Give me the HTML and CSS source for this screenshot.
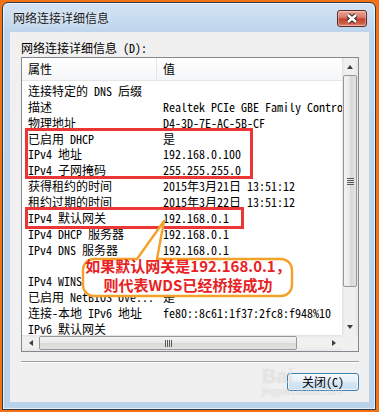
FILE: index.html
```html
<!DOCTYPE html>
<html>
<head>
    <meta charset="UTF-8">
    <title>网络连接详细信息</title>
    <meta name="viewport" content="width=device-width, initial-scale=1.0">
    <link rel="stylesheet" href="styles.css">
</head>
<body>
    <div class="window">
        <div class="titlebar">
            <span class="title">网络连接详细信息</span>
            <div class="close-btn">
                <svg width="28" height="15" viewBox="0 0 28 15">
                    <path d="M10 4 L18 11 M18 4 L10 11" stroke="#3a2626" stroke-width="4.6" fill="none"/>
                    <path d="M10 4 L18 11 M18 4 L10 11" stroke="#ffffff" stroke-width="2.4" fill="none"/>
                </svg>
            </div>
        </div>

        <div class="client">
            <div class="label">网络连接详细信息 (D):</div>

            <div class="listview">
                <div class="list-main">
                    <div class="list-header">
                        <div class="c1">属性</div>
                        <div class="c2">值</div>
                    </div>
                    <div class="list-rows">
                        <div class="row"><span class="c1">连接特定的 DNS 后缀</span><span class="c2"></span></div>
                        <div class="row"><span class="c1">描述</span><span class="c2">Realtek PCIe GBE Family Controller</span></div>
                        <div class="row"><span class="c1">物理地址</span><span class="c2">D4-3D-7E-AC-5B-CF</span></div>
                        <div class="row"><span class="c1">已启用 DHCP</span><span class="c2">是</span></div>
                        <div class="row"><span class="c1">IPv4 地址</span><span class="c2">192.168.0.100</span></div>
                        <div class="row"><span class="c1">IPv4 子网掩码</span><span class="c2">255.255.255.0</span></div>
                        <div class="row"><span class="c1">获得租约的时间</span><span class="c2">2015年3月21日 13:51:12</span></div>
                        <div class="row"><span class="c1">租约过期的时间</span><span class="c2">2015年3月22日 13:51:12</span></div>
                        <div class="row"><span class="c1">IPv4 默认网关</span><span class="c2">192.168.0.1</span></div>
                        <div class="row"><span class="c1">IPv4 DHCP 服务器</span><span class="c2">192.168.0.1</span></div>
                        <div class="row"><span class="c1">IPv4 DNS 服务器</span><span class="c2">192.168.0.1</span></div>
                        <div class="row"><span class="c1"></span><span class="c2"></span></div>
                        <div class="row"><span class="c1">IPv4 WINS 服务器</span><span class="c2"></span></div>
                        <div class="row"><span class="c1">已启用 NetBIOS ove...</span><span class="c2">是</span></div>
                        <div class="row"><span class="c1">连接-本地 IPv6 地址</span><span class="c2">fe80::8c61:1f37:2fc8:f948%10</span></div>
                        <div class="row"><span class="c1">IPv6 默认网关</span><span class="c2"></span></div>
                    </div>
                </div>

                <div class="vscroll">
                    <div class="sb-btn"><span class="tri-up"></span></div>
                    <div class="thumb-v"><span class="grip-v"></span></div>
                    <div class="sb-space"></div>
                    <div class="sb-btn"><span class="tri-down"></span></div>
                </div>

                <div class="hscroll">
                    <div class="sb-btn-h"><span class="tri-left"></span></div>
                    <div class="thumb-h"><span class="grip-h"></span></div>
                    <div class="sb-space"></div>
                    <div class="sb-btn-h"><span class="tri-right"></span></div>
                </div>

                <div class="corner"></div>
            </div>

            <div class="separator"></div>

            <div class="footer">
                <button class="button">关闭(C)</button>
            </div>
        </div>
    </div>

    <!-- marcas vermelhas e balão de anotação -->
    <div class="mark mark-dhcp"></div>
    <div class="mark mark-gateway"></div>

    <svg class="callout-shape" width="379" height="412" viewBox="0 0 379 412">
        <path d="M94 259 L137 259 L164 221 L157 259 L281 259 A11 11 0 0 1 292 270 L292 285 A11 11 0 0 1 281 296 L94 296 A11 11 0 0 1 83 285 L83 270 A11 11 0 0 1 94 259 Z"
              fill="#ffffff" stroke="#f4a12a" stroke-width="2.4" stroke-linejoin="round"/>
    </svg>
    <div class="callout-text">如果默认网关是192.168.0.1，<br>则代表WDS已经桥接成功</div>

    <div class="watermark">
        <span class="wm-logo">Bai</span>
        <span class="wm-url">jingyan.baidu.com</span>
    </div>
</body>
</html>
```

FILE: styles.css
```css
* {
    box-sizing: border-box;
}
html, body {
    margin: 0;
}
body {
    width: 379px;
    height: 412px;
    background-color: #f47216;
    padding: 2px 3px 2px 2px;
    position: relative;
    overflow: hidden;
    font-family: "Noto Sans Mono CJK SC", "Liberation Mono", "Noto Sans CJK SC", monospace;
    font-size: 12px;
    color: #000;
}
.window {
    height: 408px;
    border: 1px solid #2e3a48;
    border-radius: 6px 6px 0 0;
    background: linear-gradient(#d3e3f4, #bed4ec 30px, #b9d1ea);
    box-shadow: inset 0 0 0 1px rgba(255, 255, 255, 0.6);
    padding: 0 6px 7px 7px;
    display: flex;
    flex-direction: column;
}
.titlebar {
    height: 29px;
    display: flex;
    justify-content: space-between;
    align-items: flex-start;
    padding: 7px 2px 0 3px;
}
.title {
    margin-top: 1px;
    line-height: 14px;
    color: #1a1a1a;
    text-shadow: 0 0 6px rgba(255, 255, 255, 0.9);
}
.close-btn {
    width: 30px;
    height: 17px;
    border: 1px solid #5b2a24;
    border-radius: 3px;
    background: linear-gradient(#eaa99b, #d47563 45%, #c2432c 52%, #cf6049 85%, #e4937e);
    box-shadow: inset 0 0 0 1px rgba(255, 255, 255, 0.35);
}
.close-btn svg {
    display: block;
}
.client {
    flex: 1;
    background-color: #f0f0f0;
    padding: 9px 10px 0 11px;
}
.label {
    height: 14px;
    line-height: 14px;
    margin-bottom: 2px;
}
.listview {
    height: 295px;
    border: 1px solid #828790;
    background-color: #fff;
    display: grid;
    grid-template-columns: 1fr 16px;
    grid-template-rows: 1fr 16px;
}
.list-main {
    overflow: hidden;
}
.list-header {
    height: 23px;
    display: flex;
    border-bottom: 1px solid #e5e5e5;
    background: linear-gradient(#ffffff, #f5f6f8);
    line-height: 22px;
}
.list-header .c1 {
    width: 135px;
    padding-left: 6px;
    border-right: 1px solid #e2e5ea;
}
.list-header .c2 {
    flex: 1;
    padding-left: 6px;
}
.list-rows {
    padding-top: 2px;
}
.row {
    display: flex;
    height: 15.87px;
    line-height: 15.87px;
    white-space: nowrap;
}
.row .c1 {
    flex: none;
    width: 135px;
    padding-left: 6px;
    overflow: hidden;
}
.row .c2 {
    padding-left: 6px;
}

/* barras de rolagem */
.vscroll {
    display: flex;
    flex-direction: column;
    background: linear-gradient(to right, #e2e2e2, #f0f0f0 3px, #f0f0f0 12px, #e6e6e6);
}
.hscroll {
    display: flex;
    background: linear-gradient(#e2e2e2, #f0f0f0 3px, #f0f0f0 12px, #e6e6e6);
}
.sb-btn {
    height: 17px;
    display: flex;
    align-items: center;
    justify-content: center;
}
.sb-btn-h {
    width: 17px;
    display: flex;
    align-items: center;
    justify-content: center;
}
.sb-space {
    flex: 1;
}
.thumb-v {
    height: 212px;
    margin: 0 1px;
    border: 1px solid #979797;
    border-radius: 2px;
    background: linear-gradient(to right, #f4f4f4, #e8e8e8 50%, #d8d8d8 51%, #e2e2e2);
    display: flex;
    align-items: center;
    justify-content: center;
}
.thumb-h {
    width: 258px;
    margin: 1px 0;
    border: 1px solid #979797;
    border-radius: 2px;
    background: linear-gradient(#f4f4f4, #e8e8e8 50%, #d8d8d8 51%, #e2e2e2);
    display: flex;
    align-items: center;
    justify-content: center;
}
.grip-v {
    width: 7px;
    height: 7px;
    background: repeating-linear-gradient(to bottom, #5a5a5a 0 1px, transparent 1px 2px);
}
.grip-h {
    width: 7px;
    height: 7px;
    background: repeating-linear-gradient(to right, #5a5a5a 0 1px, transparent 1px 2px);
}
.tri-up {
    border-left: 3.5px solid transparent;
    border-right: 3.5px solid transparent;
    border-bottom: 4px solid #3d3d3d;
}
.tri-down {
    border-left: 3.5px solid transparent;
    border-right: 3.5px solid transparent;
    border-top: 4px solid #3d3d3d;
}
.tri-left {
    border-top: 3.5px solid transparent;
    border-bottom: 3.5px solid transparent;
    border-right: 4px solid #3d3d3d;
}
.tri-right {
    border-top: 3.5px solid transparent;
    border-bottom: 3.5px solid transparent;
    border-left: 4px solid #3d3d3d;
}
.corner {
    background-color: #f0f0f0;
}

.separator {
    margin-top: 9px;
    height: 2px;
    border-top: 1px solid #a0a0a0;
    border-bottom: 1px solid #ffffff;
}
.footer {
    display: flex;
    justify-content: flex-end;
    margin-top: 10px;
}
.button {
    width: 72px;
    height: 18px;
    padding: 0;
    border: 1px solid #3c7fb1;
    border-radius: 3px;
    background: linear-gradient(#f4f9fd, #e6f0f8 45%, #d5e6f4 52%, #cbe0f2);
    box-shadow: inset 0 0 0 1px rgba(255, 255, 255, 0.7);
    font-family: inherit;
    font-size: 12px;
    line-height: 16px;
    color: #000;
}

/* anotações por cima da janela */
.mark {
    position: absolute;
    border: 3px solid #ec3636;
}
.mark-dhcp {
    left: 25px;
    top: 128px;
    width: 228px;
    height: 51px;
}
.mark-gateway {
    left: 25px;
    top: 207px;
    width: 219px;
    height: 22px;
}
.callout-shape {
    position: absolute;
    left: 0;
    top: 0;
}
.callout-text {
    position: absolute;
    left: 83px;
    top: 256px;
    width: 210px;
    text-align: center;
    font-family: "Noto Sans CJK SC", "Liberation Sans", sans-serif;
    font-weight: 700;
    font-size: 15px;
    line-height: 19px;
    color: #e8221f;
}
.watermark {
    position: absolute;
    left: 262px;
    top: 366px;
    display: flex;
    flex-direction: column;
    font-family: "Liberation Sans", sans-serif;
    color: rgba(255, 255, 255, 0.55);
    text-shadow: 0 0 1px rgba(0, 0, 0, 0.18);
}
.wm-logo {
    font-size: 20px;
    font-weight: 700;
    line-height: 20px;
}
.wm-url {
    font-size: 10px;
    line-height: 12px;
}
```
